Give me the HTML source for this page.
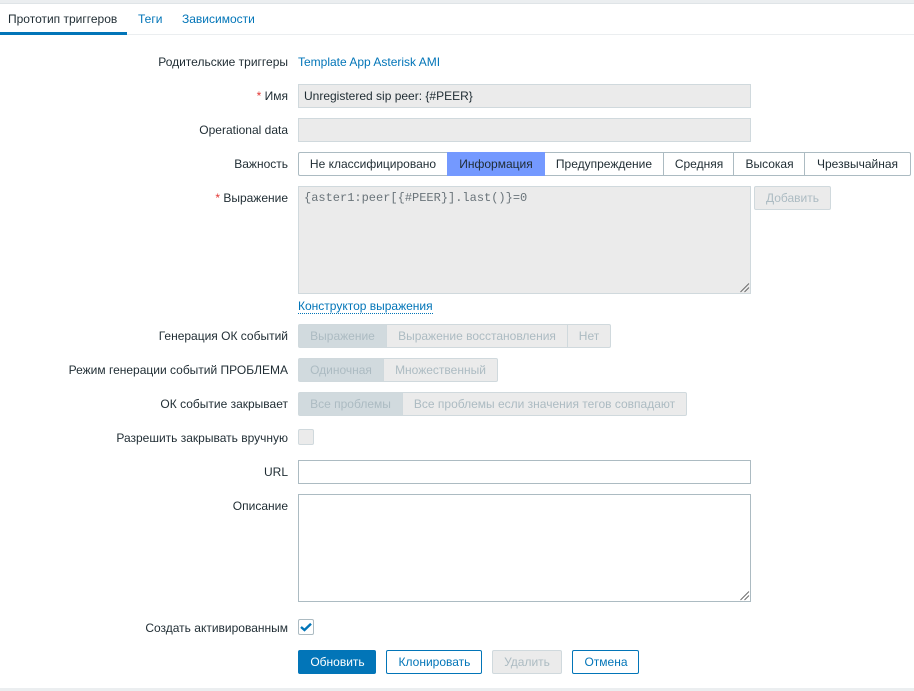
<!DOCTYPE html>
<html><head><meta charset="utf-8">
<style>
html,body{margin:0;padding:0;width:914px;height:691px;overflow:hidden;background:#fff;font:12px "Liberation Sans",Arial,sans-serif;color:#1f2c33}
.a{position:absolute;box-sizing:border-box;white-space:nowrap}
.l{position:absolute;right:626px;white-space:nowrap;line-height:14px}
.l i{font-style:normal;color:#e33734}
.inp{position:absolute;box-sizing:border-box;left:298px;width:453px;border:1px solid #acbbc2;background:#fff}
.dis{background:#ebebeb;border-color:#d0d9dd}
.seg{position:absolute;box-sizing:border-box;height:24px;line-height:22px;text-align:center;border:1px solid #acbbc2;background:#fff;white-space:nowrap}
.d{border-color:#d0d9dd;background:#ebebeb;color:#acbbc2}
.d.on{background:#d1dade}
.btn{position:absolute;box-sizing:border-box;top:650px;height:24px;line-height:22px;text-align:center;border:1px solid #0275b8;border-radius:2px;color:#0275b8;background:#fff}
.rz{position:absolute;right:0;bottom:0}
</style></head><body>
<div class="a" style="left:0;top:0;width:914px;height:4px;background:#ebeef0;border-bottom:1px solid #dfe4e7"></div>
<div class="a" style="left:0;top:34px;width:914px;height:1px;background:#ebeef0"></div>
<div class="a" style="left:0;top:32px;width:127px;height:3px;background:#0275b8"></div>
<div class="a" style="left:8px;top:12px;line-height:14px">Прототип триггеров</div>
<div class="a" style="left:138px;top:12px;line-height:14px;color:#0275b8">Теги</div>
<div class="a" style="left:182px;top:12px;line-height:14px;color:#0275b8">Зависимости</div>

<div class="l" style="top:55px">Родительские триггеры</div>
<div class="a" style="left:298px;top:55px;line-height:14px;color:#0275b8">Template App Asterisk AMI</div>

<div class="l" style="top:89px"><i>*</i> Имя</div>
<div class="inp dis" style="top:84px;height:24px;line-height:22px;padding-left:5px">Unregistered sip peer: {#PEER}</div>

<div class="l" style="top:123px">Operational data</div>
<div class="inp dis" style="top:118px;height:24px"></div>

<div class="l" style="top:157px">Важность</div>
<div class="seg" style="left:298px;top:152px;width:150px;border-radius:2px 0 0 2px">Не классифицировано</div>
<div class="seg" style="left:447px;top:152px;width:98px;background:#7499ff;border-color:#7499ff">Информация</div>
<div class="seg" style="left:545px;top:152px;width:119px;border-left:0">Предупреждение</div>
<div class="seg" style="left:664px;top:152px;width:70px;border-left:0;padding-left:1px">Средняя</div>
<div class="seg" style="left:734px;top:152px;width:71px;border-left:0;padding-left:1px">Высокая</div>
<div class="seg" style="left:805px;top:152px;width:106px;border-left:0;border-radius:0 2px 2px 0">Чрезвычайная</div>

<div class="l" style="top:191px"><i>*</i> Выражение</div>
<div class="inp dis" style="top:186px;height:108px;padding:3px 5px;font:12px/16px 'Liberation Mono',monospace;color:#6a747a">{aster1:peer[{#PEER}].last()}=0
<svg class="rz" width="12" height="12" viewBox="0 0 12 12"><path d="M2.5 11 L11 2.5 M6.5 11 L11 6.5" stroke="#666" stroke-width="0.9" fill="none"/></svg></div>
<div class="seg d" style="left:754px;top:186px;width:77px;border-radius:2px">Добавить</div>
<div class="a" style="left:298px;top:299px;line-height:14px;height:15px;color:#0275b8;border-bottom:1px dotted #0275b8">Конструктор выражения</div>

<div class="l" style="top:329px">Генерация ОК событий</div>
<div class="seg d on" style="left:298px;top:324px;width:89px;border-radius:2px 0 0 2px">Выражение</div>
<div class="seg d" style="left:386px;top:324px;width:182px">Выражение восстановления</div>
<div class="seg d" style="left:567px;top:324px;width:44px;border-radius:0 2px 2px 0">Нет</div>

<div class="l" style="top:363px">Режим генерации событий ПРОБЛЕМА</div>
<div class="seg d on" style="left:298px;top:358px;width:86px;border-radius:2px 0 0 2px">Одиночная</div>
<div class="seg d" style="left:383px;top:358px;width:115px;border-radius:0 2px 2px 0">Множественный</div>

<div class="l" style="top:397px">ОК событие закрывает</div>
<div class="seg d on" style="left:298px;top:392px;width:105px;border-radius:2px 0 0 2px">Все проблемы</div>
<div class="seg d" style="left:402px;top:392px;width:285px;border-radius:0 2px 2px 0">Все проблемы если значения тегов совпадают</div>

<div class="l" style="top:431px">Разрешить закрывать вручную</div>
<div class="a" style="left:298px;top:429px;width:16px;height:16px;background:#ebebeb;border:1px solid #d0d9dd;border-radius:2px"></div>

<div class="l" style="top:465px">URL</div>
<div class="inp" style="top:460px;height:24px"></div>

<div class="l" style="top:499px">Описание</div>
<div class="inp" style="top:494px;height:108px"><svg class="rz" width="12" height="12" viewBox="0 0 12 12"><path d="M2.5 11 L11 2.5 M6.5 11 L11 6.5" stroke="#666" stroke-width="0.9" fill="none"/></svg></div>

<div class="l" style="top:621px">Создать активированным</div>
<div class="a" style="left:298px;top:619px;width:16px;height:16px;background:#fff;border:1px solid #acbbc2;border-radius:2px"><svg width="14" height="14" viewBox="0 0 14 14" style="display:block"><path d="M2 7 L5.5 10 L12 3.8" stroke="#0275b8" stroke-width="2.4" fill="none"/></svg></div>

<div class="btn" style="left:298px;width:78px;background:#0275b8;color:#fff;padding-left:1px">Обновить</div>
<div class="btn" style="left:386px;width:96px;padding-left:1px">Клонировать</div>
<div class="btn" style="left:492px;width:70px;background:#ebebeb;border-color:#d0d9dd;color:#acbbc2">Удалить</div>
<div class="btn" style="left:572px;width:67px;padding-left:1px">Отмена</div>

<div class="a" style="left:0;top:688px;width:914px;height:3px;background:#ebeef0"></div>
</body></html>
